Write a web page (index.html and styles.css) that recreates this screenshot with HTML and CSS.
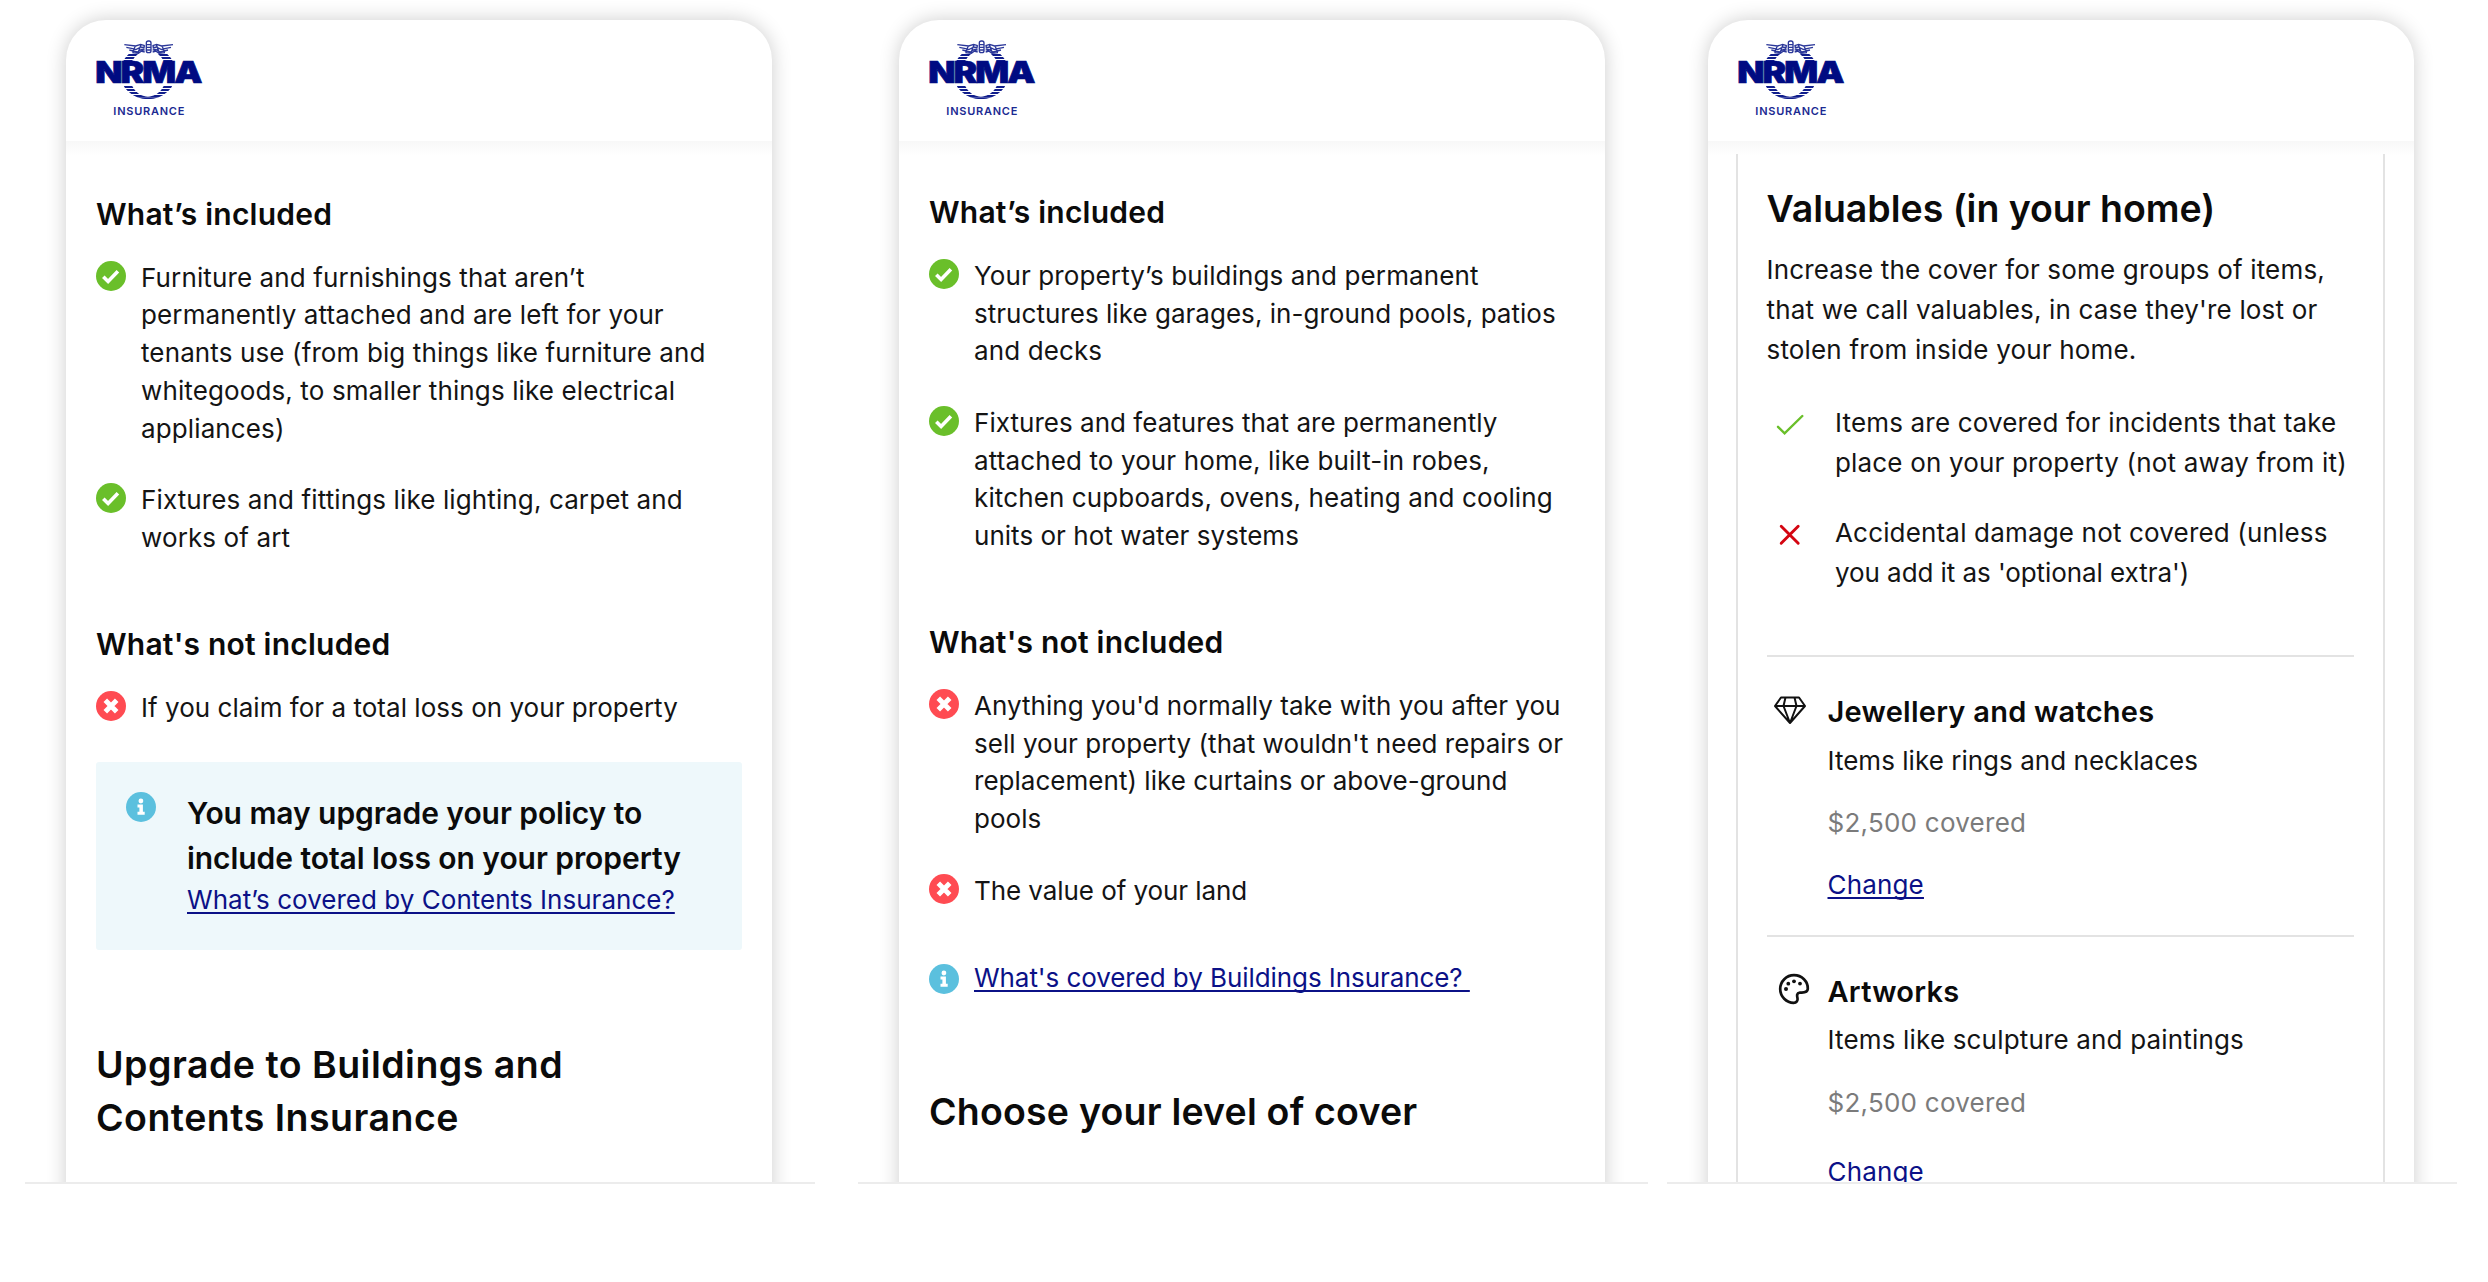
FILE: index.html
```html
<!DOCTYPE html>
<html lang="en">
<head>
<meta charset="utf-8">
<title>NRMA Insurance – cover options</title>
<link rel="stylesheet" href="styles.css">
</head>
<body>
<svg class="defs" aria-hidden="true">
  <defs>
    <symbol id="i-check" viewBox="0 0 30 30">
      <circle cx="15" cy="15" r="15" fill="#6abf2a"/>
      <path d="M7.300 15.700l4.800 4.800 9.800-10.200" fill="none" stroke="#fff" stroke-width="3.600"/>
    </symbol>
    <symbol id="i-cross" viewBox="0 0 30 30">
      <circle cx="15" cy="15" r="15" fill="#ff4b52"/>
      <path d="M9.300 9.300l11.400 11.400M20.700 9.300L9.300 20.700" fill="none" stroke="#fff" stroke-width="5"/>
    </symbol>
    <symbol id="i-info" viewBox="0 0 30 30">
      <circle cx="15" cy="15" r="15" fill="#5bc0de"/>
      <circle cx="14.900" cy="9" r="2.400" fill="#fff"/>
      <path d="M11.500 12.600h5.400v7.200h1.800v2.900h-7.200v-2.900h1.900v-4.300h-1.900z" fill="#fff"/>
    </symbol>
    <clipPath id="ring">
      <path clip-rule="evenodd" d="M168 32a84 79 0 0 1 0 158a84 79 0 0 1 0-158zM168 44c32 0 56 30 56 68s-24 70-56 70s-56-32-56-70s24-68 56-68z"/>
    </clipPath>
    <symbol id="logo" viewBox="0 0 348 252">
      <g clip-path="url(#ring)">
        <path d="M80 57h64m48 0h64M80 66h176M80 75h176M80 153h176M80 162h176M80 171h176M80 180h176M80 187h176" stroke="#101d8c" stroke-width="6.200"/>
      </g>
      <g fill="none" stroke="#2b3799" stroke-width="4">
        <path d="M97 26l34 4 15-5 12 4M103 34l30 6 14-7 11 3M112 42l24 6 12-8 10 2M121 50l18 2 10-7 9 3M130 30l-8 18M147 26l-9 24M158 28l-8 20"/>
        <path d="M243 26l-34 4-15-5-12 4M237 34l-30 6-14-7-11 3M228 42l-24 6-12-8-10 2M219 50l-18 2-10-7-9 3M210 30l8 18M193 26l9 24M182 28l8 20"/>
        <rect x="163" y="15" width="14" height="35" rx="6"/>
        <path d="M163 26h14M163 34h14M163 42h14"/>
      </g>
      <g transform="translate(10 142) scale(1.21 1)"><text class="logo-name">NRMA</text></g>
      <text class="logo-sub" x="64" y="237" textLength="213" lengthAdjust="spacing">INSURANCE</text>
    </symbol>
  </defs>
</svg>
<main class="board">
  <section class="frame">
    <article class="card">
      <header class="card-head"><svg class="logo"><use href="#logo"/></svg></header>
      <div class="body body-a">
        <h3>What’s included</h3>
        <ul class="list">
          <li><svg class="ic"><use href="#i-check"/></svg><p>Furniture and furnishings that aren’t<br>permanently attached and are left for your<br>tenants use (from big things like furniture and<br>whitegoods, to smaller things like electrical<br>appliances)</p></li>
          <li><svg class="ic"><use href="#i-check"/></svg><p>Fixtures and fittings like lighting, carpet and<br>works of art</p></li>
        </ul>
        <h3 class="second">What's not included</h3>
        <ul class="list">
          <li><svg class="ic"><use href="#i-cross"/></svg><p class="snug">If you claim for a total loss on your property</p></li>
        </ul>
        <aside class="notice">
          <svg class="ic"><use href="#i-info"/></svg>
          <div>
            <h4>You may upgrade your policy to<br>include total loss on your property</h4>
            <p class="snug"><a>What’s covered by Contents Insurance?</a></p>
          </div>
        </aside>
        <h2 class="upgrade">Upgrade to Buildings and<br>Contents Insurance</h2>
      </div>
    </article>
  </section>

  <section class="frame">
    <article class="card">
      <header class="card-head"><svg class="logo"><use href="#logo"/></svg></header>
      <div class="body body-b">
        <h3>What’s included</h3>
        <ul class="list">
          <li><svg class="ic"><use href="#i-check"/></svg><p>Your property’s buildings and permanent<br><span class="snug">structures like garages, in-ground pools, patios</span><br>and decks</p></li>
          <li><svg class="ic"><use href="#i-check"/></svg><p><span class="snug">Fixtures and features that are permanently</span><br>attached to your home, like built-in robes,<br>kitchen cupboards, ovens, heating and cooling<br><span class="snug">units or hot water systems</span></p></li>
        </ul>
        <h3 class="second">What's not included</h3>
        <ul class="list">
          <li><svg class="ic"><use href="#i-cross"/></svg><p class="snug">Anything you'd normally take with you after you<br>sell your property (that wouldn't need repairs or<br>replacement) like curtains or above-ground<br>pools</p></li>
          <li><svg class="ic"><use href="#i-cross"/></svg><p class="tight">The value of your land</p></li>
        </ul>
        <div class="more"><svg class="ic"><use href="#i-info"/></svg><p class="tight"><a>What's covered by Buildings Insurance?&nbsp;</a></p></div>
        <h2 class="choose">Choose your level of cover</h2>
      </div>
    </article>
  </section>

  <section class="frame">
    <article class="card">
      <header class="card-head"><svg class="logo"><use href="#logo"/></svg></header>
      <div class="body body-c">
        <div class="sheet">
          <h2>Valuables (in your home)</h2>
          <p class="intro">Increase the cover for some groups of items,<br>that we call valuables, in case they're lost or<br>stolen from inside your home.</p>
          <ul class="points">
            <li><svg viewBox="0 0 30 30"><path d="M3 16.800l6.600 6.600L27.300 6" fill="none" stroke="#6abf2a" stroke-width="2.400" stroke-linecap="round"/></svg><p>Items are covered for incidents that take<br>place on your property (not away from it)</p></li>
            <li><svg viewBox="0 0 30 30"><path d="M6.200 6.200l17 17M23.200 6.200l-17 17" fill="none" stroke="#d40511" stroke-width="2.900" stroke-linecap="round"/></svg><p>Accidental damage not covered (unless<br><span class="tight">you add it as 'optional extra')</span></p></li>
          </ul>
          <section class="group jewels">
            <svg class="glyph" viewBox="0 0 34 30"><path d="M8 2.500h18L32 11 17 28 2 11zM2 11h30M12.500 2.500L10.500 11 17 28l6.500-17-2-8.500" fill="none" stroke="#111" stroke-width="2" stroke-linejoin="round"/></svg>
            <div>
              <h5>Jewellery and watches</h5>
              <p class="about snug">Items like rings and necklaces</p>
              <p class="sum">$2,500 covered</p>
              <p class="change"><a>Change</a></p>
            </div>
          </section>
          <section class="group art">
            <svg class="glyph" viewBox="0 0 32 32"><path d="M16 2.200C8.400 2.200 2.200 8.400 2.200 16S8.400 29.800 15.600 29.800c3 0 4.400-2.200 3.900-4.600-.6-2.600-1-5.200 2.300-5.600 3-.3 7.700.8 8-3.700C30.200 8.400 23.800 2.200 16 2.200z" fill="none" stroke="#111" stroke-width="2.700"/><g fill="#111"><circle cx="8" cy="16" r="2"/><circle cx="10.300" cy="10.700" r="1.900"/><circle cx="16" cy="8.300" r="1.900"/><circle cx="22" cy="10.600" r="1.900"/></g></svg>
            <div>
              <h5>Artworks</h5>
              <p class="about">Items like sculpture and paintings</p>
              <p class="sum">$2,500 covered</p>
              <p class="change"><a>Change</a></p>
            </div>
          </section>
        </div>
      </div>
    </article>
  </section>
</main>
</body>
</html>
```
FILE: styles.css
```css
* { box-sizing: border-box; margin: 0; padding: 0; }

body {
  height: 1282px;
  overflow: hidden;
  background: #fff;
  color: #141414;
  font: 380 26px/37.75px Inter, "Liberation Sans", sans-serif;
  letter-spacing: .12px;
  white-space: nowrap;
}

.defs { position: absolute; width: 0; height: 0; }

.board { display: flex; padding-left: 25px; }

.frame {
  flex: none;
  width: 790px;
  height: 1184px;
  padding: 20px 43px 0 41px;
  overflow: hidden;
  border-bottom: 2px solid #ececec;
}
.frame:nth-child(2) { margin-left: 43px; }
.frame:nth-child(3) { margin-left: 19px; }

.card {
  width: 706px;
  height: 1300px;
  border-radius: 40px 40px 0 0;
  background: #fff;
  box-shadow: 0 0 20px rgba(0, 0, 0, .2);
}

.card-head { height: 121px; padding: 16px 0 0 26px; }
.logo { display: block; width: 116px; height: 84px; }
.logo-name { font: 900 88px Inter, sans-serif; letter-spacing: -5px; fill: #000b82; stroke: #000b82; stroke-width: 2px; }
.logo-sub { font: 600 33px Inter, sans-serif; letter-spacing: 0; fill: #1c2a92; }

.body { padding: 0 30px; background: linear-gradient(#f8f8f8, #fff 15px); }
.body-a { padding-top: 53.6px; }
.body-b { padding-top: 51.8px; }
.body-c { padding: 12.7px 29.5px 0 28px; }

h2, h3, h4, h5 { font-weight: 560; color: #0b0b0b; }
h2 { font-size: 37.5px; line-height: 52.5px; letter-spacing: .48px; }
h3 { font-size: 30px; line-height: 38px; letter-spacing: .22px; }
h4 { font-size: 30px; line-height: 45px; letter-spacing: -.06px; }
h5 { font-size: 29px; line-height: 38px; letter-spacing: .25px; }
.second { margin-top: 68px; }
.choose { letter-spacing: .2px; }

.snug { letter-spacing: .03px; }
.tight { letter-spacing: -.07px; }

ul { list-style: none; }
.list { display: flex; flex-direction: column; gap: 33.9px; margin-top: 26px; }
.list li, .more { display: flex; gap: 15px; }
.ic { flex: none; width: 30px; height: 30px; margin-top: 2px; }

a { color: #0b1187; text-decoration: underline 1.5px; text-underline-offset: 3px; text-decoration-skip-ink: none; }

.notice {
  display: flex;
  gap: 31px;
  height: 188.5px;
  margin-top: 35.5px;
  padding: 28.8px 30px 0;
  border-radius: 3px;
  background: #eef8fb;
}
.notice .ic { margin-top: 1px; }
.upgrade { margin-top: 88.8px; }

.more { margin: 49px 0 90px; }
.more .ic { margin-top: 5.3px; }

.sheet {
  height: 1100px;
  padding: 29.3px 29px 0 28.5px;
  border: solid #e3e3e3;
  border-width: 0 2px;
  line-height: 39.6px;
  letter-spacing: .17px;
}
.sheet h2 { letter-spacing: -.03px; }
.intro { margin-top: 15px; }
.points { display: flex; flex-direction: column; gap: 30.8px; margin: 34px 0 62.5px; }
.points li { display: flex; gap: 30.5px; }
.points svg { flex: none; width: 30px; height: 30px; margin: 7px 0 0 8px; }

.group { display: flex; padding-top: 36.5px; border-top: 2px solid #e3e3e3; line-height: 38px; }
.jewels .glyph { flex: none; width: 34px; height: 30px; margin: 2px 21px 0 6px; }
.art { padding-top: 36.4px; }
.art .glyph { flex: none; width: 32px; height: 32px; margin: 0 18px 0 11px; }
.about { margin-top: 10.5px; }
.sum { margin-top: 24.3px; color: #7b7b7b; letter-spacing: .25px; }
.change { margin: 23.9px 0 30.4px; }
.art .change { margin-top: 31.3px; }
```
